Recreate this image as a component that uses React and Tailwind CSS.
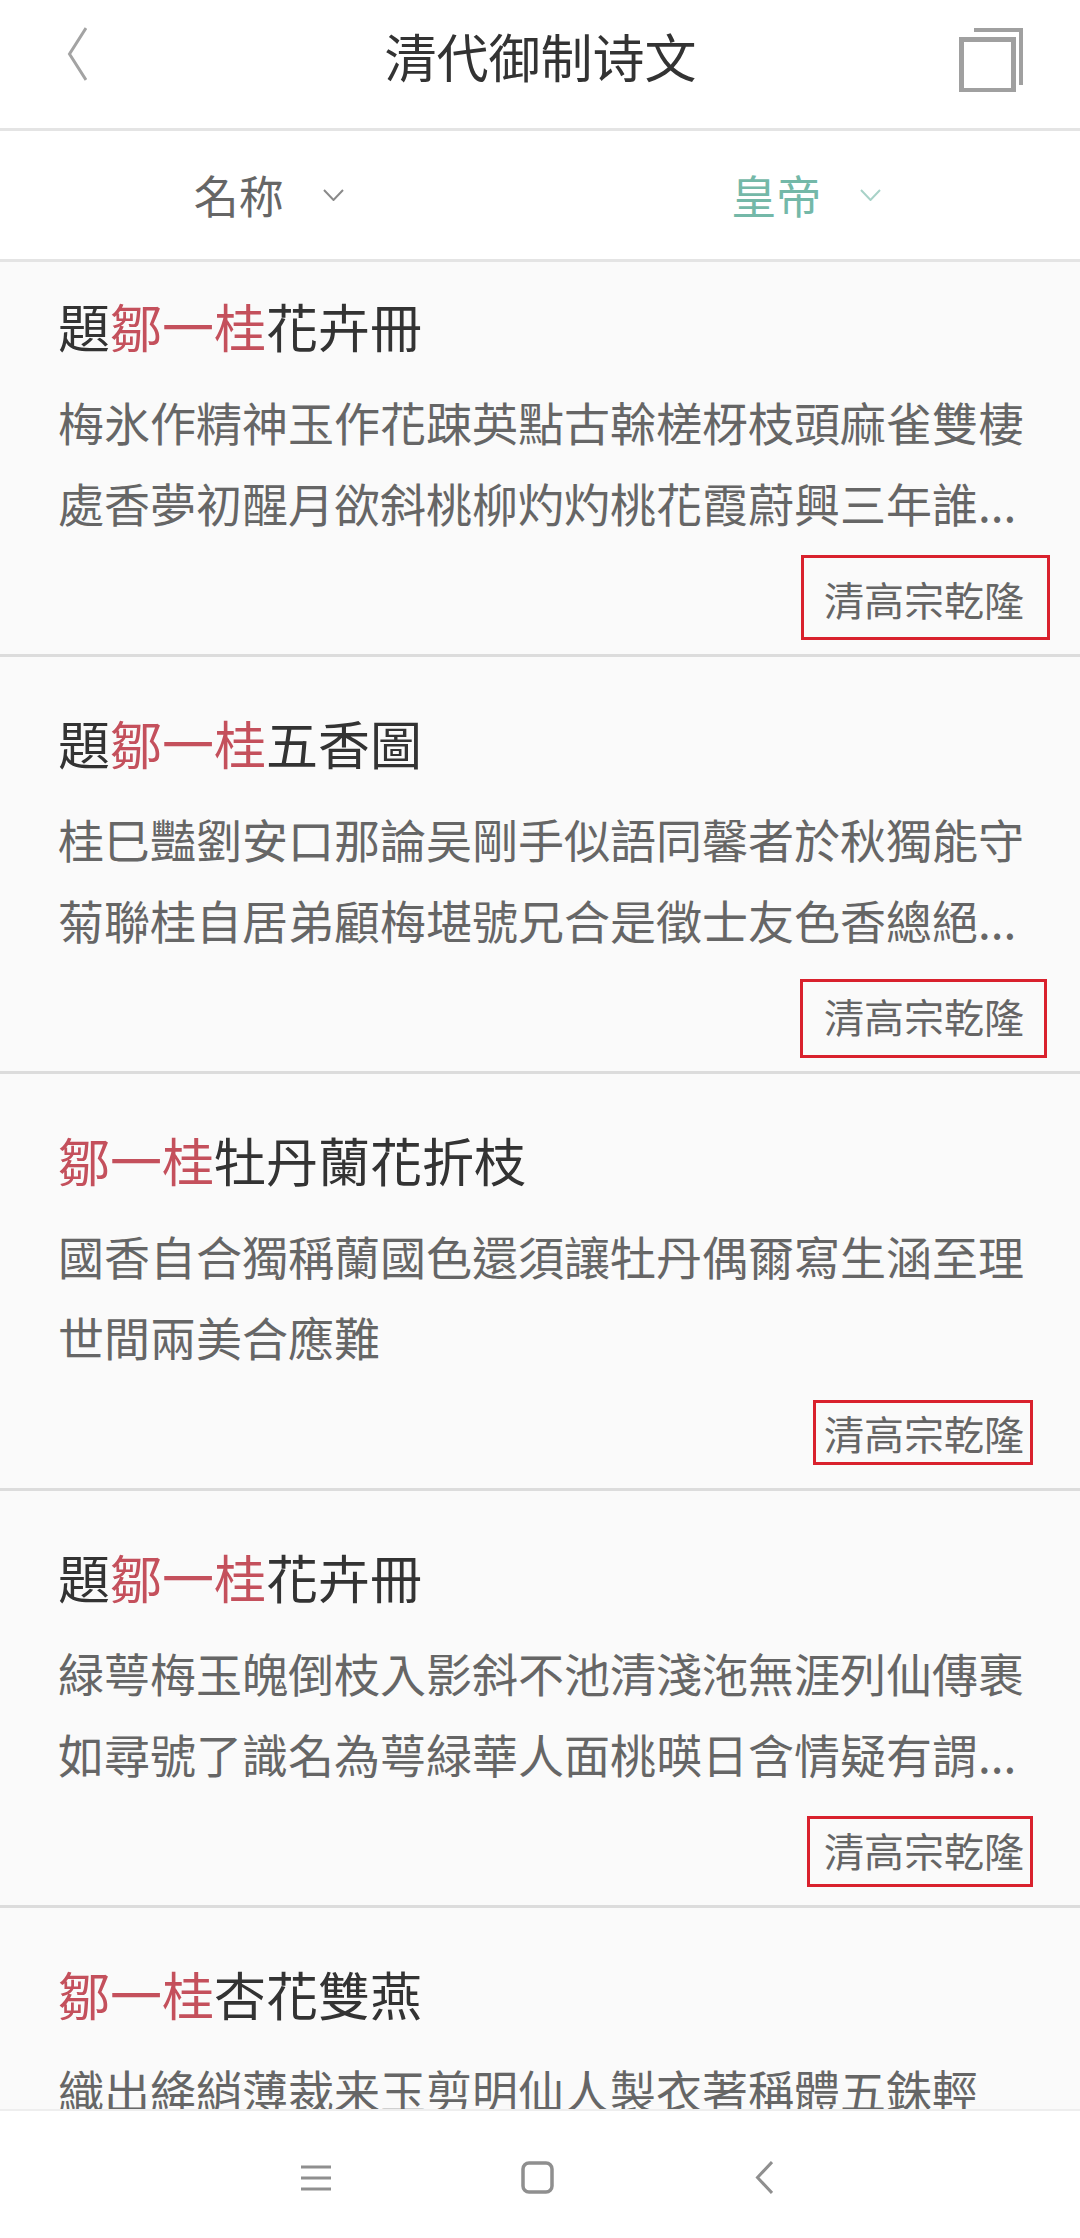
const items = [
  {
    before: "題",
    after: "花卉冊",
    body: "梅氷作精神玉作花踈英點古榦槎枒枝頭麻雀雙棲處香夢初醒月欲斜桃柳灼灼桃花霞蔚興三年誰...",
    box: "-left-[23px] -right-[26px] -top-[20px] -bottom-[17px]",
  },
  {
    before: "題",
    after: "五香圖",
    body: "桂巳豔劉安口那論吴剛手似語同馨者於秋獨能守菊聯桂自居弟顧梅堪號兄合是徵士友色香總絕...",
    box: "-left-[24px] -right-[23px] -top-[13px] -bottom-[18px]",
  },
  {
    before: "",
    after: "牡丹蘭花折枝",
    body: "國香自合獨稱蘭國色還須讓牡丹偶爾寫生涵至理世間兩美合應難",
    box: "-left-[11px] -right-[9px] -top-[9px] -bottom-[8px]",
  },
  {
    before: "題",
    after: "花卉冊",
    body: "緑萼梅玉魄倒枝入影斜不池清淺沲無涯列仙傳裹如尋號了識名為萼緑華人面桃暎日含情疑有謂...",
    box: "-left-[17px] -right-[9px] -top-[10px] -bottom-[13px]",
  },
];

function Chevron({ className }) {
  return (
    <svg width="21" height="12" viewBox="0 0 21 12" fill="none" className={className}>
      <path d="M1 1l9.5 10L20 1" stroke="currentColor" strokeWidth="2" />
    </svg>
  );
}

function BackIcon({ width, height, className }) {
  return (
    <svg width={width} height={height} viewBox={`0 0 ${width} ${height}`} fill="none" className={className}>
      <path
        d={`M${width - 1} 1L2.5 ${height / 2}L${width - 1} ${height - 1}`}
        stroke="currentColor"
        strokeWidth="3"
      />
    </svg>
  );
}

function Title({ before, after }) {
  return (
    <h2 className="text-[52px] leading-[60px] font-normal text-[#333]">
      {before}
      <span className="text-[#c4505c]">鄒一桂</span>
      {after}
    </h2>
  );
}

function Item({ item }) {
  return (
    <div className="h-[417px] border-b-[3px] border-[#dcdcdc] pl-[58px] pt-[56px]">
      <Title before={item.before} after={item.after} />
      <p className="mt-[25px] w-[970px] text-[46px] leading-[81px] text-[#666]">{item.body}</p>
      <div className="mt-[32px] flex w-[966px] justify-end">
        <span className="relative text-[40px] leading-[48px] text-[#666]">
          清高宗乾隆
          <span className={`absolute border-[3px] border-[#d9212d] ${item.box}`} />
        </span>
      </div>
    </div>
  );
}

export default function App() {
  return (
    <div
      className="flex h-[2238px] w-[1080px] flex-col overflow-hidden bg-white"
      style={{ fontFamily: '"Noto Sans CJK TC", "Noto Sans CJK SC", sans-serif' }}
    >
      <header className="grid h-[131px] shrink-0 grid-cols-[1fr_auto_1fr] items-start border-b-[3px] border-[#e4e4e4] pl-[58px] pr-[57px]">
        <BackIcon width={20} height={54} className="ml-[9px] mt-[27px] text-[#a3a3a3]" />
        <h1 className="mt-[26px] text-[52px] leading-[60px] font-normal text-[#333]">清代御制诗文</h1>
        <svg width="64" height="64" viewBox="0 0 64 64" fill="none" className="mt-[28px] justify-self-end text-[#a0a0a0]">
          <path d="M2.5 11.5h52v51h-52z" stroke="currentColor" strokeWidth="5" />
          <path d="M15 2h47v55" stroke="currentColor" strokeWidth="4" />
        </svg>
      </header>

      <div className="grid h-[131px] shrink-0 grid-cols-2 items-center border-b-[3px] border-[#e4e4e4] pr-[5px]">
        <div className="flex items-center justify-center gap-[39px] text-[#666]">
          <span className="text-[45px]">名称</span>
          <Chevron className="text-[#8a8a8a]" />
        </div>
        <div className="flex items-center justify-center gap-[39px] text-[#74b8a8]">
          <span className="text-[45px]">皇帝</span>
          <Chevron className="text-[#a8d2c8]" />
        </div>
      </div>

      <main className="min-h-0 flex-1 overflow-hidden bg-[#fafafa]">
        <div className="-mt-[22px]">
          {items.map((item, i) => (
            <Item key={i} item={item} />
          ))}
          <div className="pl-[58px] pt-[56px]">
            <Title before="" after="杏花雙燕" />
            <p className="mt-[25px] w-[970px] text-[46px] leading-[81px] text-[#666]">
              織出絳綃薄裁来玉剪明仙人製衣著稱體五銖輕
            </p>
          </div>
        </div>
      </main>

      <nav className="flex h-[129px] shrink-0 items-center justify-center border-t-2 border-[#eeeeee] bg-white pr-[7px] pt-[6px] text-[#8f8f8f]">
        <svg width="32" height="28" viewBox="0 0 32 28" fill="none" className="mr-[189px]">
          <path d="M1 3h30M1 14h30M1 25h30" stroke="currentColor" strokeWidth="3" />
        </svg>
        <svg width="34" height="33" viewBox="0 0 34 33" fill="none" className="mr-[200px]">
          <rect x="2" y="2" width="29" height="29" rx="6" stroke="currentColor" strokeWidth="3.5" />
        </svg>
        <BackIcon width={18} height={33} />
      </nav>
    </div>
  );
}
